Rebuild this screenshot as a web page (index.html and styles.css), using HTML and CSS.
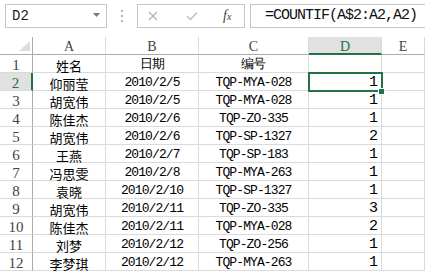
FILE: index.html
```html
<!DOCTYPE html>
<html lang="zh">
<head>
  <meta charset="UTF-8" />
  <title>COUNTIF</title>
  <link rel="stylesheet" href="styles.css">
</head>
<body>
  <div class="formula-bar">
    <div class="name-box">
      <span>D2</span>
      <svg class="caret" width="7" height="4" viewBox="0 0 7 4"><path d="M0 0H7L3.5 4Z" fill="#7a7a7a"/></svg>
    </div>
    <div class="grip"><i></i><i></i><i></i></div>
    <div class="fx-box">
      <svg class="ico" width="10" height="10" viewBox="0 0 10 10"><path d="M1 1L9 9M9 1L1 9" stroke="#b4b4b4" stroke-width="1.2" fill="none"/></svg>
      <svg class="ico" width="12" height="10" viewBox="0 0 12 10"><path d="M1 5L4.5 8.5L11 1.5" stroke="#bdbdbd" stroke-width="1.4" fill="none"/></svg>
      <span class="fx">f<small>x</small></span>
    </div>
    <div class="formula">=COUNTIF(A$2:A2,A2)</div>
  </div>

  <div class="sheet">
    <div class="corner"><svg width="11" height="10" viewBox="0 0 11 10"><path d="M11 0V10H0Z" fill="#dcdcdc"/></svg></div>
    <div class="colhead">A</div>
    <div class="colhead">B</div>
    <div class="colhead">C</div>
    <div class="colhead active">D</div>
    <div class="colhead">E</div>
  </div>
  <div class="sheet" id="rows"></div>

  <script>
    const data = [
      ['姓名', '日期', '编号', ''],
      ['仰丽莹', '2010/2/5', 'TQP-MYA-028', 1],
      ['胡宽伟', '2010/2/5', 'TQP-MYA-028', 1],
      ['陈佳杰', '2010/2/6', 'TQP-ZO-335', 1],
      ['胡宽伟', '2010/2/6', 'TQP-SP-1327', 2],
      ['王燕', '2010/2/7', 'TQP-SP-183', 1],
      ['冯思雯', '2010/2/8', 'TQP-MYA-263', 1],
      ['袁晓', '2010/2/10', 'TQP-SP-1327', 1],
      ['胡宽伟', '2010/2/11', 'TQP-ZO-335', 3],
      ['陈佳杰', '2010/2/11', 'TQP-MYA-028', 2],
      ['刘梦', '2010/2/12', 'TQP-ZO-256', 1],
      ['李梦琪', '2010/2/12', 'TQP-MYA-263', 1]
    ];
    const rows = document.getElementById('rows');
    rows.innerHTML = data.map((r, i) => {
      const n = i + 1;
      const cur = n === 2;
      return `
        <div class="rowhead${cur ? ' active' : ''}">${n}</div>
        <div class="cell name">${r[0]}</div>
        <div class="cell mono">${r[1]}</div>
        <div class="cell mono">${r[2]}</div>
        <div class="cell num${cur ? ' sel' : ''}">${r[3]}</div>
        <div class="cell"></div>`;
    }).join('');
  </script>
</body>
</html>
```

FILE: styles.css
```css
body {
  margin: 0;
  background: #fff;
  color: #000;
  font-family: 'Liberation Mono', monospace;
  overflow: hidden;
}
.formula-bar {
  display: flex;
  align-items: flex-end;
  height: 37px;
  padding: 0 0 9px 5px;
  box-sizing: border-box;
}
.name-box {
  width: 102px;
  height: 24px;
  box-sizing: border-box;
  border: 1px solid #c6c6c6;
  display: flex;
  align-items: center;
  justify-content: space-between;
  padding: 0 6px 0 6px;
  font-size: 14px;
  color: #222;
}
.caret {
  margin-top: -3px;
}
.grip {
  width: 30px;
  height: 24px;
  display: flex;
  flex-direction: column;
  align-items: center;
  justify-content: center;
  gap: 3px;
}
.grip i {
  width: 2px;
  height: 2px;
  background: #b4b4b4;
}
.fx-box {
  width: 108px;
  height: 24px;
  box-sizing: border-box;
  border: 1px solid #c6c6c6;
  display: flex;
  align-items: center;
  padding-left: 10px;
}
.fx-box .ico:first-child {
  margin-right: 28px;
}
.fx-box .ico {
  margin-right: 25px;
}
.fx {
  font-family: 'Liberation Serif', serif;
  font-style: italic;
  font-size: 14px;
  color: #444;
}
.fx small {
  font-size: 10px;
}
.formula {
  flex: 1;
  height: 24px;
  margin-left: 5px;
  box-sizing: border-box;
  border: 1px solid #c6c6c6;
  border-right: none;
  padding-left: 14px;
  font-size: 15px;
  letter-spacing: -1px;
  line-height: 22px;
  color: #111;
  white-space: nowrap;
}
.sheet {
  display: grid;
  grid-template-columns: 33px 73px 93px 110px 73px 1fr;
  grid-auto-rows: 18px;
}
.corner, .colhead, .rowhead, .cell {
  box-sizing: border-box;
  border-right: 1px solid #dadada;
  border-bottom: 1px solid #dadada;
}
.corner {
  border-right-color: #ababab;
  border-bottom-color: #ababab;
  display: flex;
  align-items: flex-end;
  justify-content: flex-end;
  padding: 0 2px 3px 0;
}
.colhead {
  border-bottom-color: #ababab;
  text-align: center;
  font-family: 'Liberation Serif', serif;
  font-size: 14px;
  line-height: 20px;
  color: #444;
}
.colhead.active {
  background: #e1e1e1;
  color: #217346;
  border-bottom: 2px solid #217346;
  line-height: 19px;
}
.rowhead {
  border-right-color: #ababab;
  text-align: center;
  font-family: 'Liberation Serif', serif;
  font-size: 15px;
  line-height: 20px;
  color: #444;
}
.rowhead.active {
  background: #e1e1e1;
  color: #217346;
  border-right: 2px solid #217346;
}
.cell {
  text-align: center;
  white-space: nowrap;
}
.cell.name {
  font-family: 'Noto Sans CJK SC', sans-serif;
  font-size: 13px;
  line-height: 21px;
}
.cell.mono {
  font-size: 13px;
  letter-spacing: -0.9px;
  line-height: 20px;
}
.cell.num {
  text-align: right;
  font-size: 15px;
  line-height: 20px;
  padding-right: 3px;
}
.cell.sel {
  position: relative;
}
.cell.sel::after {
  content: '';
  position: absolute;
  left: -1px;
  top: -1px;
  right: -2px;
  bottom: -2px;
  border: 2px solid #217346;
}
.cell.sel::before {
  content: '';
  position: absolute;
  right: -4px;
  bottom: -5px;
  width: 5px;
  height: 5px;
  background: #217346;
  border: 1px solid #fff;
  z-index: 1;
}
```
